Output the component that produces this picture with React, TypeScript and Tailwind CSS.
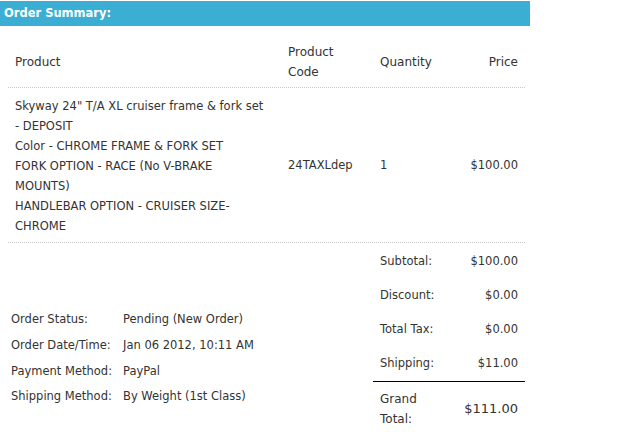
const FONT = { fontFamily: 'Tahoma, "DejaVu Sans", Verdana, sans-serif' };

const PRODUCT_LINES = [
  'Skyway 24" T/A XL cruiser frame & fork set',
  '- DEPOSIT',
  'Color - CHROME FRAME & FORK SET',
  'FORK OPTION - RACE (No V-BRAKE',
  'MOUNTS)',
  'HANDLEBAR OPTION - CRUISER SIZE-',
  'CHROME',
];

const INFO = [
  { label: 'Order Status:', value: 'Pending (New Order)' },
  { label: 'Order Date/Time:', value: 'Jan 06 2012, 10:11 AM' },
  { label: 'Payment Method:', value: 'PayPal' },
  { label: 'Shipping Method:', value: 'By Weight (1st Class)' },
];

const TOTALS = [
  { label: 'Subtotal:', value: '$100.00' },
  { label: 'Discount:', value: '$0.00' },
  { label: 'Total Tax:', value: '$0.00' },
  { label: 'Shipping:', value: '$11.00' },
];

export default function App() {
  return (
    <div className="w-[640px] h-[432px] bg-white text-[11.5px] text-[#333]" style={FONT}>
      {/* Title bar */}
      <div className="mt-[1px] w-[530px] h-[25px] bg-[#3aaed3] flex items-center pl-[4px] text-[11.5px] font-bold text-white">
        Order Summary:
      </div>

      <div className="ml-[8px] w-[517px]">
        {/* Header row */}
        <div className="flex items-center h-[62px] pt-[10px] border-b border-dotted border-[#c8c8c8] text-[12px]">
          <div className="w-[280px] pl-[7px]">Product</div>
          <div className="w-[92px] leading-[20px]">Product<br />Code</div>
          <div className="w-[80px]">Quantity</div>
          <div className="flex-1 text-right pr-[7px]">Price</div>
        </div>

        {/* Product row */}
        <div className="flex items-center h-[155px] pt-[2px] border-b border-dotted border-[#c8c8c8]">
          <div className="w-[280px] pl-[7px] leading-[20px]">
            {PRODUCT_LINES.map(l => <div key={l}>{l}</div>)}
          </div>
          <div className="w-[92px]">24TAXLdep</div>
          <div className="w-[80px]">1</div>
          <div className="flex-1 text-right pr-[7px]">$100.00</div>
        </div>

        {/* Footer */}
        <div className="flex">
          <div className="w-[365px] pt-[64px] pl-[3px]">
            {INFO.map(r => (
              <div key={r.label} className="flex h-[25.7px] items-center">
                <div className="w-[112px]">{r.label}</div>
                <div>{r.value}</div>
              </div>
            ))}
          </div>
          <div className="flex-1 pt-[2px]">
            {TOTALS.map(r => (
              <div key={r.label} className="flex h-[34px] items-center justify-between pl-[7px] pr-[7px]">
                <span>{r.label}</span>
                <span>{r.value}</span>
              </div>
            ))}
            <div className="border-t border-black flex items-center justify-between pl-[7px] pr-[7px] pt-[7px]">
              <div className="text-[12px] leading-[20px]">Grand<br />Total:</div>
              <div className="text-[13px]">$111.00</div>
            </div>
          </div>
        </div>
      </div>
    </div>
  );
}
